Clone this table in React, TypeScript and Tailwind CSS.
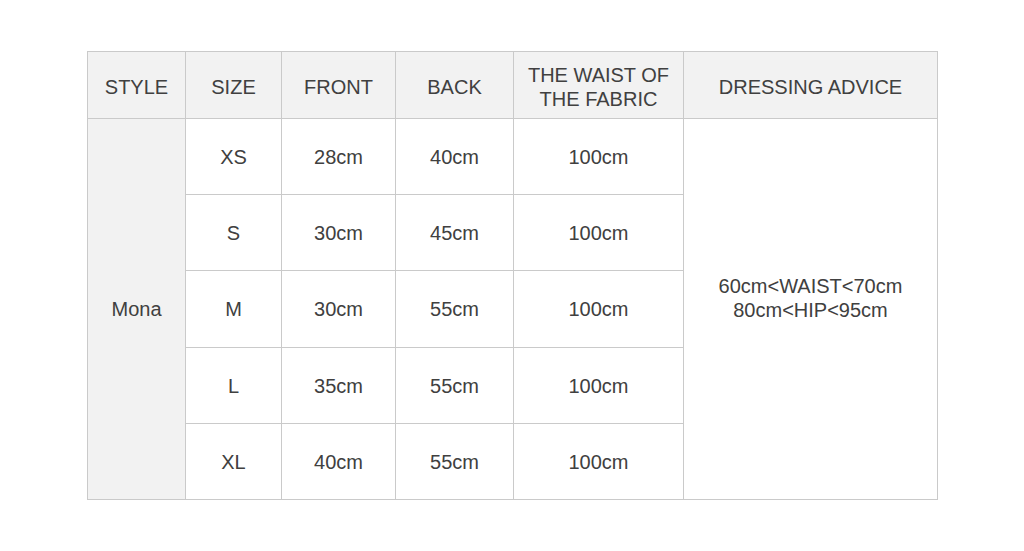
const HEAD = ["STYLE", "SIZE", "FRONT", "BACK", "THE WAIST OF THE FABRIC", "DRESSING ADVICE"];

const ROWS = [
  { size: "XS", front: "28cm", back: "40cm", waist: "100cm" },
  { size: "S", front: "30cm", back: "45cm", waist: "100cm" },
  { size: "M", front: "30cm", back: "55cm", waist: "100cm" },
  { size: "L", front: "35cm", back: "55cm", waist: "100cm" },
  { size: "XL", front: "40cm", back: "55cm", waist: "100cm" },
];

const cell = "flex items-center justify-center text-center bg-white";

export default function App() {
  return (
    <div
      className="w-[1024px] h-[551px] bg-white pt-[51px] pl-[87px] text-[20px] leading-[24px] text-[#404040]"
      style={{ fontFamily: '"Liberation Sans", Arial, sans-serif' }}
    >
      <div className="inline-grid grid-cols-[97px_95px_113px_117px_169px_253px] grid-rows-[66px_75px_75px_76px_75px_75px] gap-px p-px bg-[#cacaca]">
        {HEAD.map((h, i) => (
          <div key={h} className={`${cell} !bg-[#f2f2f2] pt-1 ${i === 4 ? "px-3" : ""}`}>
            {h}
          </div>
        ))}
        <div className={`${cell} !bg-[#f2f2f2] row-start-2 row-span-5 col-start-1`}>Mona</div>
        {ROWS.map((r, i) => (
          <div key={r.size} className="contents">
            <div className={`${cell} col-start-2`} style={{ gridRowStart: i + 2 }}>{r.size}</div>
            <div className={`${cell} col-start-3`} style={{ gridRowStart: i + 2 }}>{r.front}</div>
            <div className={`${cell} col-start-4`} style={{ gridRowStart: i + 2 }}>{r.back}</div>
            <div className={`${cell} col-start-5`} style={{ gridRowStart: i + 2 }}>{r.waist}</div>
          </div>
        ))}
        <div className={`${cell} row-start-2 row-span-5 col-start-6 flex-col pb-[22px]`}>
          <span>60cm&lt;WAIST&lt;70cm</span>
          <span>80cm&lt;HIP&lt;95cm</span>
        </div>
      </div>
    </div>
  );
}
